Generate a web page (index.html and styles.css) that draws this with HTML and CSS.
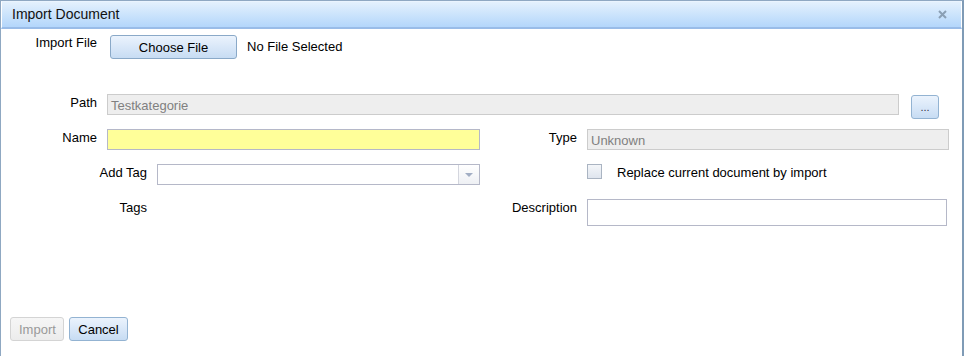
FILE: index.html
```html
<!DOCTYPE html>
<html lang="en">
<head>
  <meta charset="UTF-8">
  <title>Import Document</title>
  <link rel="stylesheet" href="styles.css">
</head>
<body>
  <div class="window">
    <!-- Header -->
    <div class="header">
      <span class="title">Import Document</span>
      <svg class="close" width="9" height="9" viewBox="0 0 9 9">
        <path d="M1 1 L8 8 M8 1 L1 8" stroke="#8a9fb4" stroke-width="2"/>
      </svg>
    </div>

    <!-- Form -->
    <div class="content">
      <div class="row file-row">
        <label class="lbl lbl-short">Import File</label>
        <button class="btn choose">Choose File</button>
        <span class="file-name">No File Selected</span>
      </div>

      <div class="row path-row">
        <label class="lbl lbl-short">Path</label>
        <div class="field readonly path-field">Testkategorie</div>
        <button class="btn dots">...</button>
      </div>

      <div class="row">
        <div class="cell">
          <label class="lbl lbl-short">Name</label>
          <div class="field required name-field"></div>
        </div>
        <div class="cell">
          <label class="lbl lbl-right">Type</label>
          <div class="field readonly type-field">Unknown</div>
        </div>
      </div>

      <div class="row">
        <div class="cell">
          <label class="lbl lbl-long">Add Tag</label>
          <div class="field combo">
            <span class="trigger"></span>
          </div>
        </div>
        <div class="cell check-cell">
          <span class="checkbox"></span>
          <span class="check-text">Replace current document by import</span>
        </div>
      </div>

      <div class="row">
        <div class="cell">
          <label class="lbl lbl-long">Tags</label>
        </div>
        <div class="cell">
          <label class="lbl lbl-right">Description</label>
          <div class="field desc-field"></div>
        </div>
      </div>
    </div>

    <!-- Footer -->
    <div class="footer">
      <button class="btn disabled">Import</button>
      <button class="btn">Cancel</button>
    </div>
  </div>
</body>
</html>
```

FILE: styles.css
```css
* {
  margin: 0;
  padding: 0;
  box-sizing: border-box;
}

body {
  font-family: 'Liberation Sans', Arial, sans-serif;
  font-size: 13px;
  color: #000;
  background: #fff;
}

.window {
  width: 964px;
  height: 356px;
  border-top: 1px solid #8fa8c2;
  border-left: 1px solid #8fa8c2;
  border-right: 2px solid #7f9bb6;
  display: flex;
  flex-direction: column;
}

/* Header */
.header {
  height: 28px;
  display: flex;
  align-items: center;
  justify-content: space-between;
  padding: 0 14px 0 10px;
  background: linear-gradient(#e4f1fd, #b3d6fb);
  border: 1px solid #fff;
  border-bottom: 2px solid #99bce8;
  border-top-color: #eaf4fe;
}

.title {
  font-size: 14px;
  color: #111;
  padding-bottom: 1px;
}

.close {
  margin-top: -1px;
}

/* Content */
.content {
  flex: 1;
  padding-top: 6px;
}

.row {
  display: flex;
  align-items: flex-start;
  margin-bottom: 14px;
}

.cell {
  display: flex;
  align-items: flex-start;
  width: 479px;
}

.lbl {
  text-align: right;
  padding-top: 1px;
  margin-right: 10px;
  flex-shrink: 0;
}

.lbl-short { width: 96px; }
.lbl-long { width: 146px; }
.lbl-right { width: 97px; }

.file-row {
  margin-bottom: 35px;
}

.file-row .lbl {
  margin-right: 13px;
  padding-top: 0;
}

.file-name {
  margin-left: 10px;
  padding-top: 4px;
}

/* Fields */
.field {
  height: 21px;
  border: 1px solid #b5b8c8;
  background: #fff;
  padding: 3px 3px 0;
  color: #000;
}

.readonly {
  background: #eeeeee;
  border-color: #cccccc;
  color: #808080;
}

.required {
  background: #ffff99;
}

.path-row {
  height: 21px;
}

.path-field { width: 792px; }
.name-field { width: 373px; }
.type-field { width: 362px; }

.combo {
  width: 323px;
  position: relative;
}

.trigger {
  position: absolute;
  right: 0;
  top: 0;
  width: 21px;
  height: 19px;
  border-left: 1px solid #d4d6de;
  background: linear-gradient(#ffffff, #eef0f4);
}

.trigger::after {
  content: '';
  position: absolute;
  left: 6px;
  top: 8px;
  border-left: 4px solid transparent;
  border-right: 4px solid transparent;
  border-top: 4px solid #a2aec4;
}

.check-cell {
  padding-left: 107px;
}

.checkbox {
  width: 15px;
  height: 15px;
  border: 1px solid #aab4c2;
  background: linear-gradient(#f4f6f9, #dfe5ee);
  margin-right: 15px;
}

.check-text {
  padding-top: 1px;
}

.desc-field {
  width: 360px;
  height: 27px;
}

/* Buttons */
.btn {
  font-family: inherit;
  font-size: 13px;
  color: #000;
  height: 24px;
  padding: 0 8px;
  border: 1px solid #93b3d2;
  border-radius: 3px;
  background: linear-gradient(#ebf3fd, #c7dcf3);
  cursor: pointer;
}

.choose {
  width: 127px;
  height: 24px;
  border-color: #8aa9c8;
}

.dots {
  width: 28px;
  height: 24px;
  margin-left: 12px;
  margin-top: 1px;
  padding: 0;
  font-size: 11px;
  color: #334;
  flex-shrink: 0;
}

.disabled {
  color: #999;
  border-color: #d4d4d4;
  background: linear-gradient(#f6f6f6, #ececec);
}

/* Footer */
.footer {
  display: flex;
  gap: 5px;
  padding: 0 0 15px 9px;
}

.footer .btn:last-child {
  width: 59px;
}

.footer .disabled {
  width: 54px;
}
```
